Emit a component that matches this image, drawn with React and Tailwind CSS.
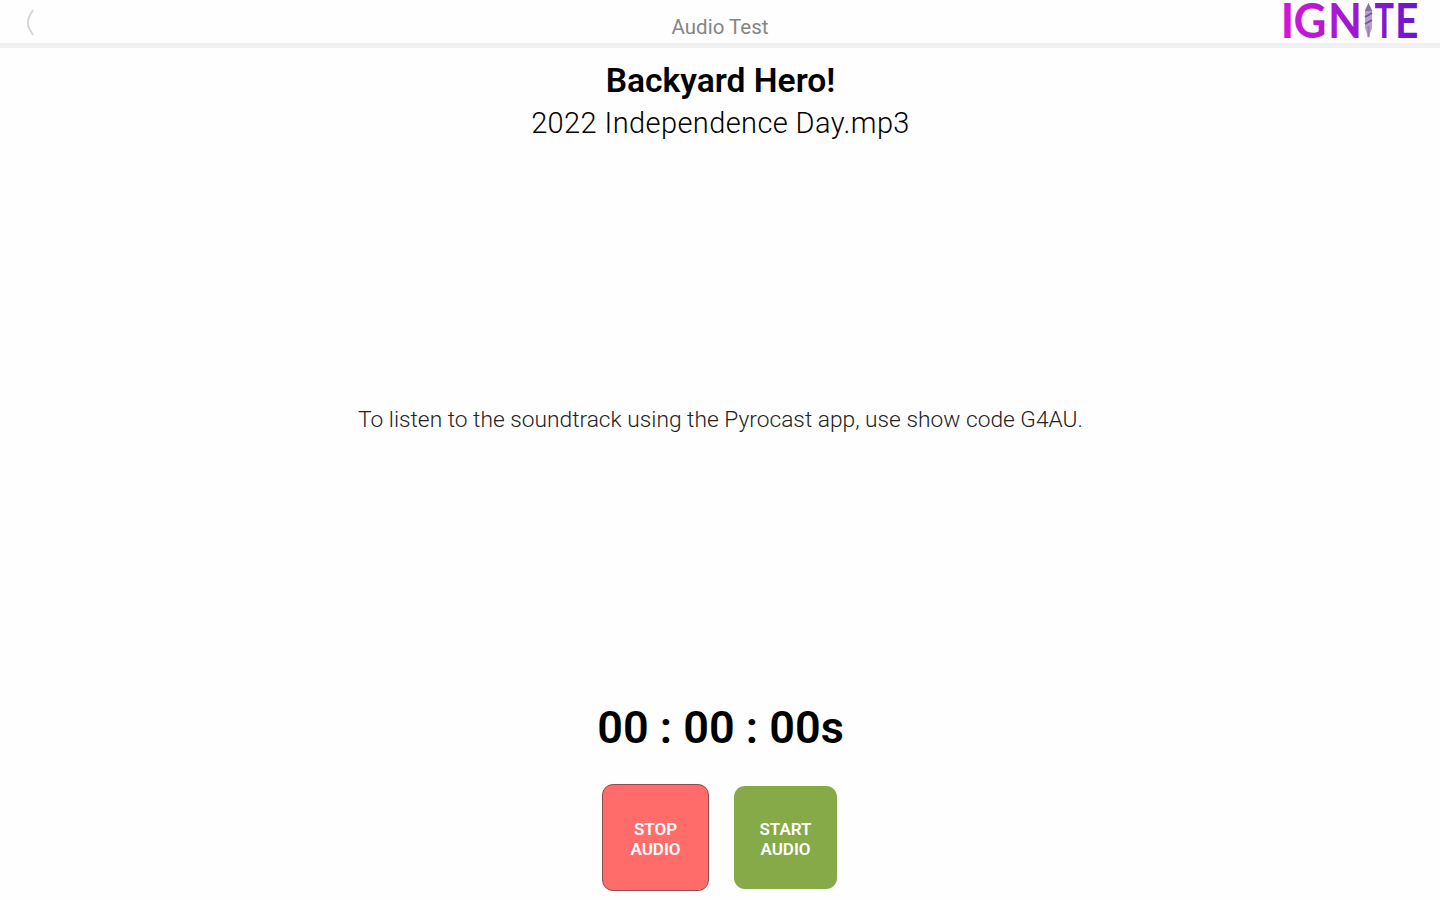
const actions = [
  {
    verb: 'STOP',
    className: 'w-[107px] h-[107px] bg-[#ff6c6a] border border-[#92494b] pt-[2px]',
  },
  {
    verb: 'START',
    className: 'w-[103px] h-[103px] bg-[#85aa47] mr-px pt-[2px]',
  },
]

function BackIcon() {
  return (
    <svg width="12" height="28" viewBox="0 0 12 28" fill="none" stroke="#d6d6d6" strokeWidth="2">
      <path d="M9 1 L5.5 7 Q4 10 4 14 Q4 18 5.5 20 L9 26" />
    </svg>
  )
}

function IgniteLogo() {
  return (
    <svg className="overflow-visible" width="140" height="43" viewBox="0 0 140 43">
      <defs>
        <linearGradient id="ignite" gradientUnits="userSpaceOnUse" x1="4" y1="0" x2="138" y2="0">
          <stop offset="0" stopColor="#d416d8" />
          <stop offset="0.5" stopColor="#9f18d2" />
          <stop offset="1" stopColor="#6816cc" />
        </linearGradient>
      </defs>
      <g fill="url(#ignite)" fontFamily="Lato, sans-serif" fontWeight="700" fontSize="47">
        <text x="0.5" y="37.5">I</text>
        <text x="13.5" y="37.5" textLength="33" lengthAdjust="spacingAndGlyphs">G</text>
        <text x="48" y="37.5" textLength="34" lengthAdjust="spacingAndGlyphs">N</text>
        <text x="94.5" y="37.5" textLength="19.5" lengthAdjust="spacingAndGlyphs">T</text>
        <text x="115" y="37.5" textLength="23.5" lengthAdjust="spacingAndGlyphs">E</text>
      </g>
      {/* firecracker in place of the second I */}
      <path d="M88.5 3 L92 10 V28 L88.5 38 L85 28 V10 Z" fill="#b9a0cc" />
      <path d="M88.5 3 L92 11 H85 Z" fill="#85759a" />
      <path d="M85 17 L92 13 M85 24 L92 20" stroke="#7d4fa0" strokeWidth="2" />
      <path d="M88.5 26 V37" stroke="#9a80b0" strokeWidth="2" />
    </svg>
  )
}

export default function App() {
  return (
    <div className="w-full h-screen overflow-hidden flex flex-col bg-[#fefefe] font-['Roboto',sans-serif] text-black">
      <header className="h-[48px] shrink-0 grid grid-cols-3 items-start border-b-[5px] border-[#f0f0f0]">
        <button className="pl-6 pt-[9px] justify-self-start" aria-label="Back">
          <BackIcon />
        </button>
        <h1 className="pt-[14px] text-center text-[20.5px] leading-[26px] text-[#858585]">
          Audio Test
        </h1>
        <div className="justify-self-end pr-[20px]">
          <IgniteLogo />
        </div>
      </header>

      <main className="flex-1 min-h-0 flex flex-col items-center text-center">
        <h2 className="mt-[13px] ml-px text-[33.6px] leading-10 font-semibold">Backyard Hero!</h2>
        <p className="mt-1 ml-px text-[29px] leading-9 font-light tracking-[0.4px]">2022 Independence Day.mp3</p>

        <p className="mt-[264px] ml-px text-[22.75px] leading-[30px] font-light text-[#222]">
          To listen to the soundtrack using the Pyrocast app, use show code G4AU.
        </p>

        <p className="mt-[265px] ml-px text-[45px] leading-[56px] font-semibold">00 : 00 : 00s</p>

        <div className="mt-[28px] flex items-center gap-[25px]">
          {actions.map(({ verb, className }) => (
            <button
              key={verb}
              className={`rounded-[11px] flex flex-col items-center justify-center
                          text-[17px] leading-5 font-semibold text-white ${className}`}
            >
              <span>{verb}</span>
              <span>AUDIO</span>
            </button>
          ))}
        </div>
      </main>
    </div>
  )
}
